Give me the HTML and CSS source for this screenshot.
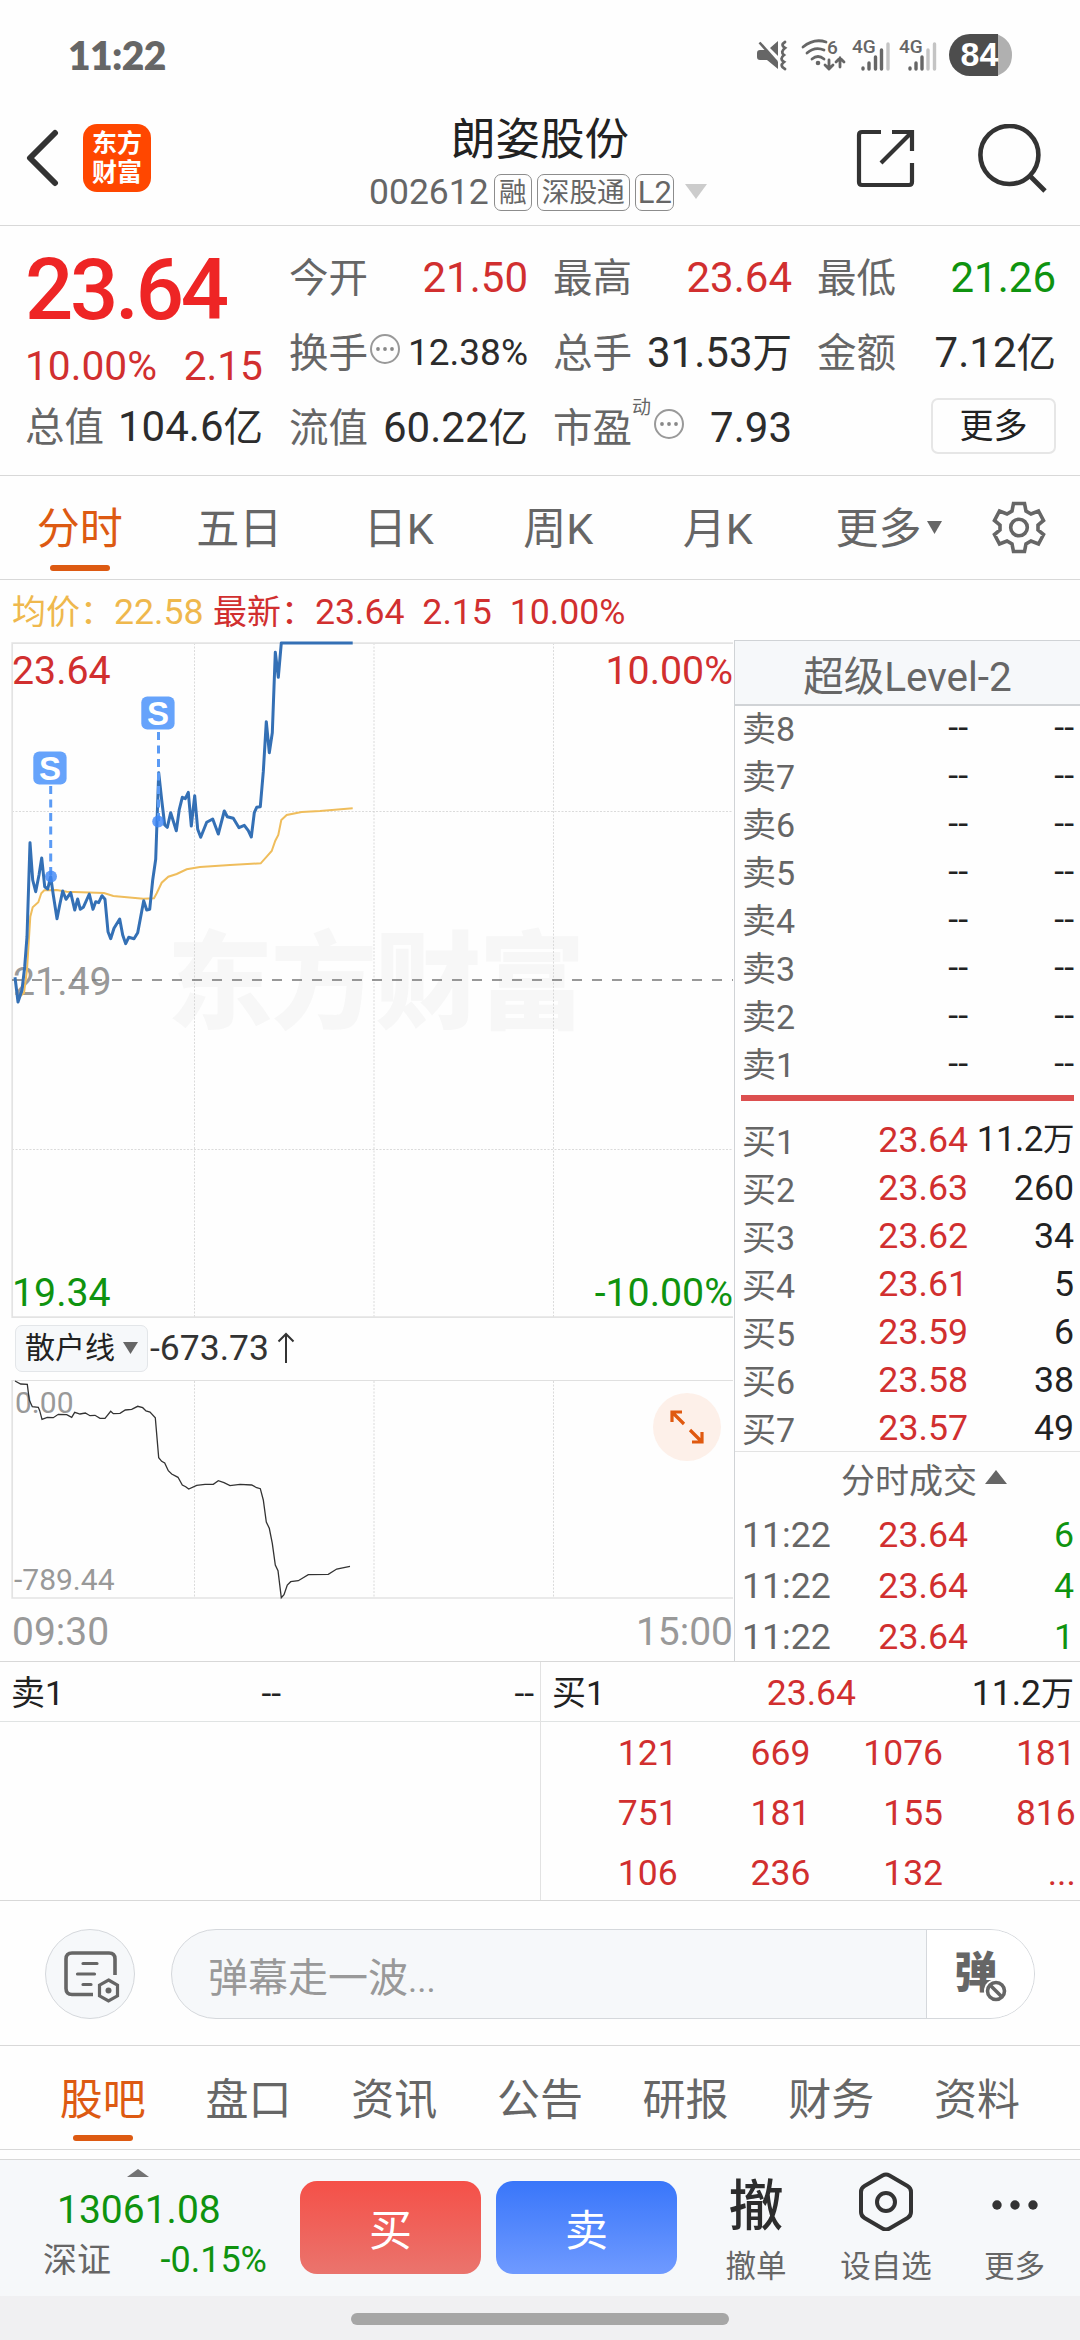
FILE: index.html
```html
<!DOCTYPE html>
<html lang="zh-CN">
<head>
    <meta charset="UTF-8">
    <meta name="viewport" content="width=device-width, initial-scale=1.0">
    <title>朗姿股份 002612</title>
    <link rel="stylesheet" href="styles.css">
</head>
<body>
    <div class="screen">

        <!-- Status bar -->
        <div class="status-bar">
            <span class="clock">11:22</span>
            <svg class="status-icons" width="258" height="44" viewBox="0 0 258 44">
                <g fill="#666">
                    <path d="M3 17h6l12 12v7L10 27H3q-3 0-3-3v-4q0-3 3-3zM13 15l8-7v15z"/>
                    <path d="M2.500 9.500L20 29" stroke="#666" stroke-width="2.600"/>
                </g>
                <g fill="none" stroke="#666" stroke-width="2.800" stroke-linecap="round">
                    <path d="M28 9q-5 3 0 6q-5 4-1 7q-5 4 0 7q-5 4 1 7"/>
                    <path d="M46 14q11-9 23-5M50 20q8-7 17-3M55 26q6-5 12 0"/>
                    <path d="M72 27v9m-4-4l4 4l4-4M83 34v-9m-4 4l4-4l4 4"/>
                </g>
                <circle cx="61" cy="30" r="2.300" fill="#666"/>
                <text x="70" y="20.500" class="tiny-label">6</text>
                <text x="95" y="19.500" class="tiny-label">4G</text>
                <text x="142" y="19.500" class="tiny-label">4G</text>
                <g stroke="#666" stroke-width="3.400" stroke-linecap="round">
                    <path d="M106 35v1M112 30v6M118.500 24v12M124.500 17v19M153 35v1M159 30v6M165 24v12"/>
                    <path d="M131 11v25M171 17v19M177.500 11v25" stroke="#c4c4c4"/>
                </g>
                <path d="M213 1h28v42h-28a21 21 0 0 1 0-42z" fill="#4d4d4d"/>
                <path d="M241 1.500q14 6 14 20.500t-14 20.500z" fill="#b0b0b0"/>
                <text x="203.500" y="33" class="battery-label">84</text>
            </svg>
        </div>

        <!-- Title bar -->
        <header class="title-bar">
            <svg class="back-icon" width="34" height="58" viewBox="0 0 34 58">
                <path d="M29 4L4 29l25 25" fill="none" stroke="#333" stroke-width="6" stroke-linecap="round" stroke-linejoin="round"/>
            </svg>
            <div class="logo"><span>东方</span><span>财富</span></div>
            <div class="stock-title">
                <h1>朗姿股份</h1>
                <div class="stock-code">
                    <span class="code">002612</span>
                    <span class="tag">融</span>
                    <span class="tag">深股通</span>
                    <span class="tag tag-l2">L2</span>
                    <svg width="22" height="16" viewBox="0 0 22 16"><path d="M0 0h22L11 15z" fill="#ccc"/></svg>
                </div>
            </div>
            <svg class="share-icon" width="60" height="60" viewBox="0 0 60 60">
                <path d="M25 3H6q-3 0-3 3v47q0 3 3 3h47q3 0 3-3V34M36 3h20v19M56 3L25 34" fill="none" stroke="#333" stroke-width="4.200"/>
            </svg>
            <svg class="search-icon" width="70" height="70" viewBox="0 0 70 70">
                <circle cx="31.400" cy="31" r="29" fill="none" stroke="#333" stroke-width="4.600"/>
                <path d="M52 52l15 15" stroke="#333" stroke-width="4.800"/>
            </svg>
        </header>

        <!-- Quote summary -->
        <section class="quote">
            <div class="quote-main">
                <div class="price">23.64</div>
                <div class="change"><span>10.00%</span><span>2.15</span></div>
                <div class="cell"><span>总值</span><b>104.6<small>亿</small></b></div>
            </div>
            <div class="quote-grid">
                <div class="cell"><span>今开</span><b class="up">21.50</b></div>
                <div class="cell"><span>最高</span><b class="up">23.64</b></div>
                <div class="cell"><span>最低</span><b class="down">21.26</b></div>
                <div class="cell">
                    <span>换手<svg class="info" width="32" height="32" viewBox="0 0 32 32"><circle cx="16" cy="16" r="14" fill="none" stroke="#999" stroke-width="2"/><g fill="#888"><circle cx="9" cy="16" r="1.900"/><circle cx="16" cy="16" r="1.900"/><circle cx="23" cy="16" r="1.900"/></g></svg></span>
                    <b class="narrow">12.38%</b>
                </div>
                <div class="cell"><span>总手</span><b>31.53<small>万</small></b></div>
                <div class="cell"><span>金额</span><b>7.12<small>亿</small></b></div>
                <div class="cell"><span>流值</span><b>60.22<small>亿</small></b></div>
                <div class="cell">
                    <span>市盈<sup>动</sup><svg class="info" width="32" height="32" viewBox="0 0 32 32"><circle cx="16" cy="16" r="14" fill="none" stroke="#999" stroke-width="2"/><g fill="#888"><circle cx="9" cy="16" r="1.900"/><circle cx="16" cy="16" r="1.900"/><circle cx="23" cy="16" r="1.900"/></g></svg></span>
                    <b>7.93</b>
                </div>
                <div class="cell cell-more"><button class="btn-more">更多</button></div>
            </div>
        </section>

        <!-- Chart period tabs -->
        <nav class="tabs period-tabs">
            <a class="active">分时</a>
            <a>五日</a>
            <a>日K</a>
            <a>周K</a>
            <a>月K</a>
            <a class="drop">更多<svg width="15" height="13" viewBox="0 0 15 13"><path d="M0 0h15L7.500 13z" fill="#666"/></svg></a>
            <svg class="gear" width="54" height="54" viewBox="0 0 54 54">
                <g fill="none" stroke="#666" stroke-width="3.600">
                    <path d="M21.500 3.500h11l1.500 7.500l5 3l7.500-3l5 9.500l-5.500 4.500v5l5.500 4.500l-5 9.500l-7.500-3l-5 3l-1.500 7.500h-11l-1.500-7.500l-5-3l-7.500 3l-5-9.500l5.500-4.500v-5l-5.500-4.500l5-9.500l7.500 3l5-3z"/>
                    <circle cx="27" cy="27.500" r="8.300"/>
                </g>
            </svg>
        </nav>

        <!-- Chart and order book -->
        <main class="trade-area">
            <div class="chart-side">
                <div class="chart-info"><span class="avg"><small>均价：</small>22.58</span><span class="last"><small>最新：</small>23.64  2.15  10.00%</span></div>
                <svg class="price-chart" width="734" height="680" viewBox="0 0 734 680">
                    <text x="167" y="380" textLength="418" class="watermark">东方财富</text>
                    <g class="grid-lines">
                        <path d="M194.500 3v674M374 3v674M553.500 3v674M12 171.500h721M12 509.500h721"/>
                    </g>
                    <path d="M733 3.200H12.200V677.200H733" fill="none" stroke="#e3e3e3" stroke-width="1.700"/>
                    <text x="13" y="355" class="axis-label grey">21.49</text>
                    <path d="M12 340h721" stroke="#777" stroke-width="1.600" stroke-dasharray="10 10"/>
                    <polyline class="avg-line" points="18,358 24,353 27,330 30.3,276.7 32.7,267.3 38.3,262.3 41.3,253.3 44.3,250.3 56.7,250 66.7,251.7 104,253 113.3,256 143.3,258.7 154,258.3 156.7,253.3 161.7,242.7 168.3,236.7 176.7,234 186.7,229.3 200,227 230,225 260.7,223.3 266.7,216.7 271.7,211 275.3,200.7 278.3,195 281.3,180 286.7,175 301.7,172 320,171 352.7,168.3"/>
                    <polyline class="price-line" points="15,337.3 18,362 22,350 24.7,326.7 27,296.7 30,202.7 32.7,240 35.7,251.7 39,235 41.7,218 44.7,246.7 47.7,249 50.7,236.7 53.3,255 57,278.7 59.7,265 62.7,251 66,259.3 70.7,252.7 74.7,270 77.7,259 80.3,269.3 83.3,267.3 89.3,254 93,269.3 95.7,261.7 98.7,262.7 102,255.7 105,259.3 108,291.7 110.7,298.7 114,288.3 119.7,279 122.7,295 125.7,303.7 128.7,297.3 134,298.7 137.7,292.7 143.7,260.7 146.7,270 149.7,269.3 152.7,240 155.7,219.3 158.7,132.7 161.7,160 164.7,185 167.3,187.3 170.7,172.7 176.3,190.7 179.3,169.3 182.3,157.3 185.3,158.7 188.3,152.3 191.3,186 194.7,155.7 197.7,189.3 200.7,197.3 206.7,182.3 212.7,179 218.3,194 224.3,171 227.3,176.7 233.3,178.3 239,187.7 244.3,185.3 248.3,190.7 251.3,197 254.3,172.7 256.7,167.3 260.3,166.7 263.3,131.7 266.3,81.7 269.3,112.7 272.3,92.7 275.3,12.3 278.3,37.3 281.3,3 352.7,3"/>
                    <!-- Sell marks -->
                    <path d="M50.700 146v90M158.500 92v90" stroke="#5b9bf5" stroke-width="3" stroke-dasharray="8 5.500"/>
                    <circle cx="51" cy="236.500" r="6" fill="#3d86f5" fill-opacity=".8"/>
                    <circle cx="158.200" cy="181.500" r="6" fill="#3d86f5" fill-opacity=".8"/>
                    <rect x="33.300" y="111.500" width="33.300" height="33" rx="6" fill="#66a3fb"/>
                    <rect x="141.300" y="56.500" width="33.300" height="33" rx="6" fill="#66a3fb"/>
                    <text x="50" y="140" class="mark">S</text>
                    <text x="158" y="85" class="mark">S</text>
                    <text x="12" y="44" class="axis-label up">23.64</text>
                    <text x="733" y="44" class="axis-label up end">10.00%</text>
                    <text x="12" y="666" class="axis-label down">19.34</text>
                    <text x="733" y="666" class="axis-label down end">-10.00%</text>
                </svg>
                <div class="indicator-row">
                    <button class="indicator">散户线<svg width="15" height="13" viewBox="0 0 15 13"><path d="M0 0h15L7.500 12z" fill="#666"/></svg></button>
                    <span>-673.73</span>
                    <svg width="18" height="32" viewBox="0 0 18 32"><path d="M9 31V2M1.500 9.500L9 2l7.500 7.500" fill="none" stroke="#333" stroke-width="2"/></svg>
                </div>
                <div class="sub-chart">
                    <svg width="734" height="222" viewBox="0 0 734 222">
                        <g class="grid-lines">
                            <path d="M194.500 1v217M374 1v217M553.500 1v217"/>
                        </g>
                        <path d="M12 .5h721" stroke="#e0e0e0"/>
                        <path d="M12.200 0v218H733" fill="none" stroke="#e3e3e3" stroke-width="1.700"/>
                        <text x="15" y="32.500" class="sub-label">0.00</text>
                        <text x="14" y="210" class="sub-label">-789.44</text>
                        <polyline class="retail-line" points="15,1 20.7,4 27.3,4.3 29.3,20 32.3,26.7 38.3,27.3 39.7,30.7 42,39.3 47.3,37.3 53.3,37.7 58.3,34.3 66.7,34.7 71.7,37.3 74.7,32.3 80,34 85.3,33 90,35.7 95,35.3 100,38.3 105,38.3 110.7,31.3 113.3,33.7 120,33.3 125.3,30 131.7,29.3 137.7,26.3 142.7,27.7 146,31 150,32 155.3,37.7 158.7,77.7 161.7,81.3 164.7,83 168.3,90.7 171.7,94 178,97.3 182.3,105 185.7,106.7 188.7,109 196.7,105.3 205,104.3 213.3,104.3 218.3,100.7 224,102.7 230,105.7 240,104.3 251.7,105 256.7,107.7 260.3,108.7 263.3,120 266.3,142 269.3,148.3 272.3,163.3 275.3,185 278,190.7 281.3,217.7 284,214.7 287.3,205 290.7,201.7 298.3,200.7 308.3,194.7 328.3,194.3 336.7,189 350,186.3"/>
                    </svg>
                    <button class="expand">
                        <svg width="36" height="36" viewBox="0 0 36 36"><path d="M3 13V3h10M3 3l12 12M33 23v10H23M33 33L21 21" fill="none" stroke="#e0590f" stroke-width="3.200"/></svg>
                    </button>
                </div>
                <div class="time-axis"><span>09:30</span><span>15:00</span></div>
            </div>

            <aside class="book">
                <div class="book-title">超级Level-2</div>
                <div class="levels sell">
                    <div class="level"><span>卖8</span><b>--</b><b>--</b></div>
                    <div class="level"><span>卖7</span><b>--</b><b>--</b></div>
                    <div class="level"><span>卖6</span><b>--</b><b>--</b></div>
                    <div class="level"><span>卖5</span><b>--</b><b>--</b></div>
                    <div class="level"><span>卖4</span><b>--</b><b>--</b></div>
                    <div class="level"><span>卖3</span><b>--</b><b>--</b></div>
                    <div class="level"><span>卖2</span><b>--</b><b>--</b></div>
                    <div class="level"><span>卖1</span><b>--</b><b>--</b></div>
                </div>
                <div class="ratio-bar"></div>
                <div class="levels buy">
                    <div class="level"><span>买1</span><b class="up">23.64</b><b class="narrow">11.2<small>万</small></b></div>
                    <div class="level"><span>买2</span><b class="up">23.63</b><b>260</b></div>
                    <div class="level"><span>买3</span><b class="up">23.62</b><b>34</b></div>
                    <div class="level"><span>买4</span><b class="up">23.61</b><b>5</b></div>
                    <div class="level"><span>买5</span><b class="up">23.59</b><b>6</b></div>
                    <div class="level"><span>买6</span><b class="up">23.58</b><b>38</b></div>
                    <div class="level"><span>买7</span><b class="up">23.57</b><b>49</b></div>
                </div>
                <div class="ticks-title">分时成交<svg width="22" height="14" viewBox="0 0 22 14"><path d="M0 14L11 0l11 14z" fill="#666"/></svg></div>
                <div class="ticks">
                    <div class="tick"><span>11:22</span><b class="up">23.64</b><b class="down">6</b></div>
                    <div class="tick"><span>11:22</span><b class="up">23.64</b><b class="down">4</b></div>
                    <div class="tick"><span>11:22</span><b class="up">23.64</b><b class="down">1</b></div>
                </div>
            </aside>
        </main>

        <!-- Order queue -->
        <section class="queue">
            <div class="queue-side">
                <div class="queue-head"><span>卖1</span><b>--</b><b>--</b></div>
            </div>
            <div class="queue-side">
                <div class="queue-head"><span>买1</span><b class="up">23.64</b><b>11.2<small>万</small></b></div>
                <div class="queue-grid">
                    <span>121</span><span>669</span><span>1076</span><span>181</span>
                    <span>751</span><span>181</span><span>155</span><span>816</span>
                    <span>106</span><span>236</span><span>132</span><span>...</span>
                </div>
            </div>
        </section>

        <!-- Comment input -->
        <section class="danmu">
            <button class="danmu-setting">
                <svg width="56" height="52" viewBox="0 0 56 52">
                    <g fill="none" stroke="#666" stroke-width="3.600">
                        <path d="M29 43.500H8q-6 0-6-6V8q0-6 6-6h37q6 0 6 6v16"/>
                        <path d="M19 12.500h14M13.500 23h17M19 33.500h8" stroke-width="3.200" stroke-linecap="round"/>
                        <path d="M44.500 29l9 5.200v10.600l-9 5.200l-9-5.200V34.200z" stroke-width="3.200"/>
                    </g>
                    <circle cx="44.500" cy="39.500" r="3" fill="#666"/>
                </svg>
            </button>
            <div class="danmu-box">
                <span class="placeholder">弹幕走一波<small>...</small></span>
                <button class="danmu-toggle">弹<svg width="24" height="24" viewBox="0 0 24 24"><circle cx="12" cy="12" r="12" fill="#fff"/><circle cx="12" cy="12" r="8.500" fill="#fff" stroke="#666" stroke-width="3.600"/><path d="M6.500 6.500l11 11" stroke="#666" stroke-width="3.600"/></svg></button>
            </div>
        </section>

        <nav class="tabs info-tabs">
            <a class="active">股吧</a>
            <a>盘口</a>
            <a>资讯</a>
            <a>公告</a>
            <a>研报</a>
            <a>财务</a>
            <a>资料</a>
        </nav>

        <!-- Bottom trade bar -->
        <footer class="trade-bar">
            <div class="index">
                <svg width="22" height="8" viewBox="0 0 22 8"><path d="M0 8L11 0l11 8z" fill="#737373"/></svg>
                <div class="index-value">13061.08</div>
                <div class="index-row"><span>深证</span><b>-0.15%</b></div>
            </div>
            <button class="btn btn-buy">买</button>
            <button class="btn btn-sell">卖</button>
            <div class="action action-cancel">
                <div class="action-icon">撤</div>
                <span>撤单</span>
            </div>
            <div class="action action-watch">
                <div class="action-icon">
                    <svg width="56" height="60" viewBox="0 0 56 60"><g fill="none" stroke="#333" stroke-width="4"><path d="M24.500 4.500q3.500-2 7 0l18 10.500q3.500 2 3.500 6v20q0 4-3.500 6l-18 10.500q-3.500 2-7 0L6.500 47Q3 45 3 41V21q0-4 3.500-6z"/><circle cx="28" cy="31" r="9"/></g></svg>
                </div>
                <span>设自选</span>
            </div>
            <div class="action action-more">
                <div class="action-icon">
                    <svg width="48" height="60" viewBox="0 0 48 60"><g fill="#333"><circle cx="6" cy="34" r="4.700"/><circle cx="24" cy="34" r="4.700"/><circle cx="42" cy="34" r="4.700"/></g></svg>
                </div>
                <span>更多</span>
            </div>
        </footer>
        <div class="gesture-bar"><i></i></div>
    </div>
</body>
</html>
```
FILE: styles.css
```css
:root {
    --up: #d12f2f;
    --down: #0f930f;
    --accent: #dd5a12;
    --text: #222;
    --muted: #666;
    --light: #999;
    --line: #d8d8d8;
    --panel: #f6f8fa;
}

* {
    box-sizing: border-box;
    margin: 0;
    padding: 0;
}

body {
    width: 1080px;
    font-family: Roboto, "Noto Sans CJK SC", sans-serif;
    color: var(--text);
    background: #fefefe;
}

button {
    font: inherit;
    border: none;
    background: none;
}

b {
    font-weight: 400;
}

svg {
    display: block;
    flex: none;
}

.screen {
    height: 2340px;
    display: flex;
    flex-direction: column;
    overflow: hidden;
}

.screen > * {
    flex: none;
}

.up {
    color: var(--up);
    fill: var(--up);
}

.down {
    color: var(--down);
    fill: var(--down);
}

/* --- Status bar --- */
.status-bar {
    height: 86px;
    padding: 33px 65px 0 68px;
    display: flex;
    justify-content: space-between;
}

.clock {
    font-family: Lato, sans-serif;
    font-size: 39px;
    font-weight: 800;
    line-height: 44px;
    letter-spacing: -.6px;
    color: #666;
}

.tiny-label {
    font-size: 19px;
    font-weight: 500;
    fill: #666;
}

.battery-label {
    font-family: "Liberation Sans", sans-serif;
    font-size: 34px;
    font-weight: 700;
    fill: #fff;
}

/* --- Title bar --- */
.title-bar {
    height: 140px;
    padding-left: 26px;
    display: flex;
    border-bottom: 1px solid var(--line);
}

.back-icon {
    margin-top: 43px;
}

.logo {
    flex: none;
    width: 68px;
    height: 68px;
    margin: 38px 0 0 23px;
    padding-top: 5px;
    border-radius: 14px;
    background: #ff4700;
    color: #fff;
    font-size: 25px;
    font-weight: 700;
    line-height: 29px;
    text-align: center;
}

.logo span {
    display: block;
}

.stock-title {
    flex: none;
    width: 380px;
    margin-left: 199px;
}

.stock-title h1 {
    margin-left: 101px;
    font-size: 44.5px;
    font-weight: 400;
    line-height: 54px;
    padding-top: 27px;
}

.stock-code {
    display: flex;
    align-items: center;
    height: 36px;
    margin-top: 7px;
    padding-left: 19px;
    color: var(--muted);
}

.code {
    font-size: 35.5px;
    width: 125px;
}

.tag {
    height: 37px;
    margin-right: 5px;
    padding: 0 4px;
    border: 1px solid #8c8c8c;
    border-radius: 7px;
    font-size: 27.700px;
    line-height: 35px;
}

.tag-l2 {
    padding: 0 2px;
    font-size: 31px;
    width: 39px;
}

.stock-code svg {
    margin-left: 6px;
}

.share-icon {
    margin: 43px 0 0 126px;
}

.search-icon {
    margin: 38px 0 0 62px;
}

/* --- Quote summary --- */
.quote {
    height: 250px;
    display: flex;
    padding: 0 24px 0 25px;
    border-bottom: 1px solid var(--line);
}

.quote-main {
    width: 238px;
    margin-right: 26px;
}

.price {
    height: 115px;
    padding-top: 14px;
    font-size: 85px;
    font-weight: 500;
    line-height: 100px;
    letter-spacing: -3.200px;
    color: #ee2525;
}

.change {
    display: flex;
    justify-content: space-between;
    height: 50px;
    line-height: 50px;
    font-size: 40.700px;
    color: var(--up);
}

.cell {
    display: flex;
    justify-content: space-between;
    height: 75px;
    font-size: 42px;
    line-height: 74px;
    white-space: nowrap;
}

.cell small {
    font-size: 39.500px;
}

.quote-main .cell {
    margin-top: -1px;
}

.cell > span {
    display: flex;
    font-size: 39.5px;
    line-height: 75px;
    color: var(--muted);
}

.cell b:not(.up):not(.down) {
    color: #2c2c2c;
}

.quote-grid {
    width: 767px;
    padding-top: 15px;
    display: grid;
    grid-template-columns: 239px 239px 239px;
    grid-auto-rows: 75px;
    column-gap: 25px;
}

.info {
    margin: 17px 0 0 1px;
}

.cell sup {
    width: 20px;
    font-size: 19px;
    line-height: 34px;
}

.cell .narrow {
    font-size: 37px;
    line-height: 73px;
}

.cell-more {
    justify-content: flex-end;
    align-items: center;
}

.btn-more {
    width: 125px;
    height: 56px;
    margin-top: -5px;
    border: 2px solid #e6e6e6;
    border-radius: 7px;
    font-size: 34px;
    line-height: 50px;
    color: var(--text);
}

/* --- Tabs --- */
.tabs {
    height: 104px;
    display: flex;
    border-bottom: 1px solid var(--line);
    font-size: 43px;
    line-height: 107px;
    color: var(--muted);
}

.tabs a {
    position: relative;
    width: 159.500px;
    height: 103px;
    text-align: center;
}

.tabs .active {
    color: var(--accent);
}

.tabs .active::after {
    content: "";
    position: absolute;
    left: 50%;
    bottom: 8px;
    width: 60px;
    height: 6px;
    margin-left: -30px;
    border-radius: 3px;
    background: var(--accent);
}

.tabs .drop {
    display: flex;
    width: 177px;
    padding-left: 38px;
}

.drop svg {
    margin: 45px 0 0 5px;
}

.gear {
    margin: 24px 0 0 17px;
}

.info-tabs {
    padding: 0 30px;
    line-height: 109px;
}

.info-tabs a {
    width: 145.700px;
}

/* --- Chart --- */
.trade-area {
    height: 1082px;
    display: flex;
    border-bottom: 1px solid var(--line);
}

.chart-side {
    width: 734px;
}

.chart-info {
    display: flex;
    height: 60px;
    padding-left: 12px;
    font-size: 35.700px;
    line-height: 64px;
    white-space: pre;
}

.chart-info small {
    font-size: 34px;
}

.avg {
    width: 201px;
    color: #efb84d;
}

.last {
    color: var(--up);
}

.watermark {
    font-size: 106px;
    font-weight: 900;
    fill: #f7f7f7;
}

.grid-lines {
    fill: none;
    stroke: #ccc;
    stroke-width: 1;
    stroke-dasharray: 2 1.500;
    stroke-opacity: .7;
}

.axis-label {
    font-size: 39.3px;
}

.grey {
    fill: var(--light);
}

.end {
    text-anchor: end;
}

.avg-line {
    fill: none;
    stroke: #efbd5c;
    stroke-width: 2;
}

.price-line {
    fill: none;
    stroke: #3470b5;
    stroke-width: 3;
    stroke-linejoin: round;
}

.mark {
    font-family: "Liberation Sans", sans-serif;
    font-size: 33px;
    font-weight: 700;
    fill: #fff;
    text-anchor: middle;
}

.indicator-row {
    height: 60px;
    display: flex;
    align-items: center;
    padding: 0 0 4px 15px;
    font-size: 35.5px;
    line-height: 48px;
    color: #333;
}

.indicator {
    display: flex;
    align-items: center;
    width: 133px;
    height: 47px;
    margin-right: 2px;
    padding-left: 9px;
    border: 1px solid #e3e6e9;
    border-radius: 7px;
    background: var(--panel);
    font-size: 30px;
    color: var(--text);
}

.indicator svg {
    margin-left: 8px;
}

.indicator-row > svg {
    margin-left: 8px;
}

.sub-chart {
    position: relative;
}

.sub-label {
    font-size: 30px;
    fill: var(--light);
}

.retail-line {
    fill: none;
    stroke: #333;
    stroke-width: 1.3;
}

.expand {
    position: absolute;
    right: 13px;
    top: 13px;
    width: 68px;
    height: 68px;
    padding: 16px;
    border-radius: 50%;
    background: #fdf0e9;
}

.time-axis {
    display: flex;
    justify-content: space-between;
    padding: 0 1px 0 12px;
    font-size: 39px;
    line-height: 60px;
    color: var(--light);
}

/* --- Order book --- */
.book {
    width: 346px;
    margin-top: 60px;
    border-left: 1px solid #d0d3d6;
}

.book-title {
    height: 66px;
    border-top: 1px solid #d0d3d6;
    border-bottom: 2px solid #d0d3d6;
    background: var(--panel);
    font-size: 40.5px;
    line-height: 73px;
    text-align: center;
    color: var(--muted);
}

.level,
.tick {
    display: grid;
    grid-template-columns: 101px 125px 106px;
    height: 48px;
    padding-left: 7px;
    font-size: 35.7px;
    line-height: 42px;
    white-space: nowrap;
}

.level span,
.tick span {
    color: var(--muted);
}

.level span {
    font-size: 34px;
    line-height: 47px;
}

.level b,
.tick b {
    display: flex;
    justify-content: flex-end;
}

.level .narrow {
    font-size: 35px;
    letter-spacing: -.5px;
}

.level small {
    font-size: 31.500px;
}

.sell {
    height: 389px;
}

.ratio-bar {
    height: 6px;
    margin: 0 6px;
    background: #dc4f4f;
}

.buy {
    height: 351px;
    padding-top: 18px;
    border-bottom: 1px solid #e3e3e3;
}

.ticks-title {
    display: flex;
    height: 58px;
    padding-left: 106px;
    font-size: 34px;
    line-height: 59px;
    color: var(--muted);
}

.ticks-title svg {
    margin: 18px 0 0 8px;
}

.tick {
    height: 51px;
    line-height: 51px;
}

/* --- Order queue --- */
.queue {
    height: 239px;
    display: flex;
    border-bottom: 1px solid var(--line);
    font-size: 35.5px;
}

.queue-side {
    width: 540px;
}

.queue-side + .queue-side {
    border-left: 1px solid #e2e2e2;
}

.queue-head {
    display: grid;
    grid-template-columns: 134px 136px 1fr;
    height: 60px;
    padding: 0 6px 0 11px;
    border-bottom: 1px solid #e0e3e3;
    line-height: 62px;
}

.queue-head span {
    font-size: 34px;
}

.queue-head b {
    text-align: right;
}

.queue-head small {
    font-size: 33px;
}

.queue-side + .queue-side .queue-head {
    grid-template-columns: 180px 124px 1fr;
}

.queue-grid {
    display: grid;
    grid-template-columns: repeat(4, 132.700px);
    grid-auto-rows: 60px;
    padding-left: 4px;
    line-height: 62px;
    text-align: right;
    color: var(--up);
}

/* --- Comment input --- */
.danmu {
    height: 145px;
    display: flex;
    padding: 28px 45px 0;
    border-bottom: 1px solid var(--line);
}

.danmu-setting {
    width: 90px;
    height: 90px;
    padding: 5px 0 0 18px;
    border: 1px solid #d5d8dc;
    border-radius: 50%;
    background: var(--panel);
}

.danmu-box {
    display: flex;
    width: 864px;
    height: 90px;
    margin-left: 36px;
    border: 1px solid #d5d8dc;
    border-radius: 45px;
    background: var(--panel);
    overflow: hidden;
}

.placeholder {
    width: 756px;
    padding-left: 36px;
    font-size: 40px;
    line-height: 97px;
    color: var(--light);
}

.placeholder small {
    font-size: 35px;
}

.danmu-toggle {
    position: relative;
    width: 108px;
    padding: 0 0 2px 27px;
    border-left: 1px solid #d5d8dc;
    background: #fff;
    font-size: 43px;
    font-weight: 900;
    line-height: 84px;
    text-align: left;
    color: var(--muted);
}

.danmu-toggle svg {
    position: absolute;
    left: 57px;
    top: 49px;
}

/* --- Bottom trade bar --- */
.trade-bar {
    display: flex;
    height: 137px;
    margin-top: 9px;
    border-top: 1px solid var(--line);
    background: #f6f8fa;
}

.index {
    width: 267px;
    padding: 9px 0 0 43px;
    margin-right: 33px;
}

.index svg {
    margin-left: 84px;
}

.index-value {
    margin: 6px 0 0 14px;
    font-size: 39px;
    line-height: 54px;
    color: var(--down);
}

.index-row {
    display: flex;
    justify-content: space-between;
    font-size: 34px;
    line-height: 47px;
    color: var(--muted);
}

.index-row b {
    font-size: 36px;
    color: var(--down);
}

.btn {
    width: 181px;
    height: 93px;
    margin: 21px 15px 0 0;
    padding-top: 4px;
    border-radius: 17px;
    font-size: 43px;
    line-height: 93px;
    color: #fff;
}

.btn-buy {
    background: linear-gradient(#f55048, #ea746d);
}

.btn-sell {
    margin-right: 0;
    background: linear-gradient(#3976fa, #6f9aff);
}

.action {
    width: 130px;
    padding-top: 11px;
    font-size: 30.5px;
    line-height: 40px;
    text-align: center;
    color: var(--muted);
}

.action-cancel {
    margin-left: 14px;
}

.action-more {
    width: 127px;
}

.action-icon {
    display: flex;
    justify-content: center;
    height: 64px;
    margin-bottom: 12px;
    font-size: 55px;
    font-weight: 500;
    line-height: 70px;
    color: #2c2c2c;
}

.gesture-bar {
    height: 45px;
    padding: 17px 351px 0;
    background: #f0f0f2;
}

.gesture-bar i {
    display: block;
    height: 12px;
    border-radius: 6px;
    background: #a6a6a6;
}
```
